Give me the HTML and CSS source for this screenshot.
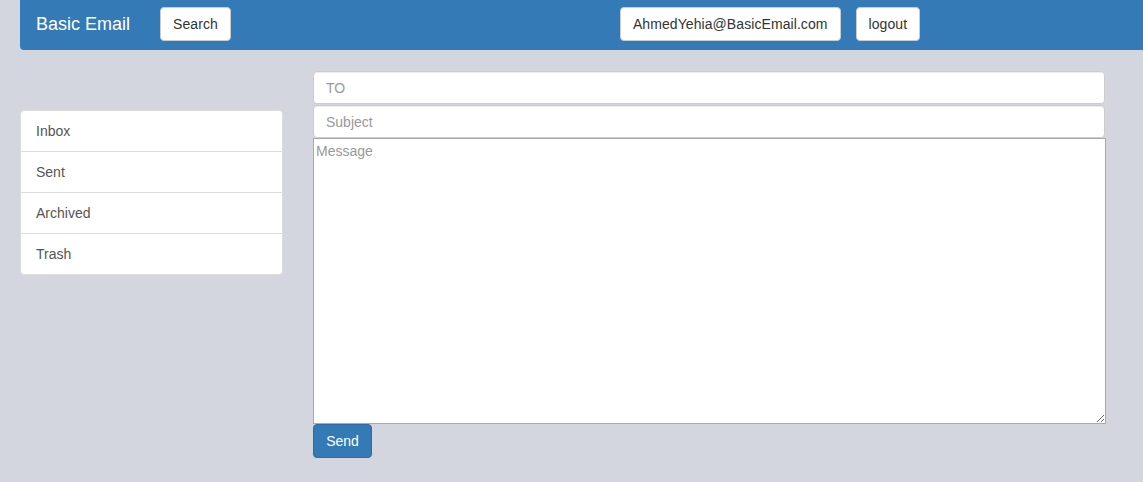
FILE: index.html
```html
<!DOCTYPE html>
<html>
<head>
<meta charset="utf-8">
<title>Basic Email</title>
<link rel="stylesheet" href="styles.css">
</head>
<body>
<nav class="navbar">
  <span class="brand">Basic Email</span>
  <button class="btn btn-default btn-nav">Search</button>
  <div class="nav-right">
    <button class="btn btn-default btn-nav">AhmedYehia@BasicEmail.com</button>
    <button class="btn btn-default btn-nav">logout</button>
  </div>
</nav>
<main class="main">
  <ul class="list-group">
    <li class="list-item">Inbox</li>
    <li class="list-item">Sent</li>
    <li class="list-item">Archived</li>
    <li class="list-item">Trash</li>
  </ul>
  <form class="compose">
    <input class="form-control to" type="text" placeholder="TO">
    <input class="form-control" type="text" placeholder="Subject">
    <textarea class="message" placeholder="Message"></textarea>
    <div><button type="button" class="btn btn-primary">Send</button></div>
  </form>
</main>
</body>
</html>
```

FILE: styles.css
```css
html, body {
  margin: 0;
  padding: 0;
  overflow: hidden;
}
body {
  background: #d3d6df;
  font-family: "Liberation Sans", Arial, sans-serif;
  font-size: 14px;
  line-height: 20px;
  color: #333;
  height: 482px;
}
.navbar {
  margin-left: 20px;
  height: 50px;
  background: #337ab7;
  border-bottom-left-radius: 4px;
  display: flex;
  align-items: center;
  box-sizing: border-box;
  padding-left: 16px;
  padding-bottom: 2px;
}
.brand {
  color: #fff;
  font-size: 18px;
  line-height: 20px;
  margin-right: 30px;
}
.btn {
  font-family: "Liberation Sans", Arial, sans-serif;
  font-size: 14px;
  line-height: 20px;
  padding: 6px 12px;
  border-radius: 4px;
  border: 1px solid #ccc;
  cursor: pointer;
  height: 34px;
  box-sizing: border-box;
}
.btn-nav {
  letter-spacing: 0.08px;
}
.btn-default {
  background: #fff;
  color: #333;
}
.btn-primary {
  background: #337ab7;
  border-color: #2e6da4;
  color: #fff;
}
.nav-right {
  margin-left: 389px;
  display: flex;
  gap: 15px;
}
.main {
  display: flex;
  padding-left: 20px;
  padding-top: 20px;
}
.list-group {
  list-style: none;
  margin: 40px 0 0 0;
  padding: 0;
  width: 263px;
  align-self: flex-start;
}
.list-item {
  background: #fff;
  border: 1px solid #ddd;
  padding: 10px 15px;
  margin-bottom: -1px;
  color: #555;
}
.list-item:first-child {
  border-top-left-radius: 4px;
  border-top-right-radius: 4px;
}
.list-item:last-child {
  border-bottom-left-radius: 4px;
  border-bottom-right-radius: 4px;
  margin-bottom: 0;
}
.compose {
  margin-left: 30px;
  width: 792px;
  display: flex;
  flex-direction: column;
  padding-top: 1px;
}
.form-control {
  display: block;
  height: 33px;
  box-sizing: border-box;
  padding: 6px 12px;
  font-family: "Liberation Sans", Arial, sans-serif;
  font-size: 14px;
  color: #555;
  background: #fff;
  border: 1px solid #ccc;
  border-radius: 4px;
  box-shadow: inset 0 1px 1px rgba(0,0,0,.075);
  margin: 0;
  outline: none;
}
.form-control.to {
  margin-bottom: 1px;
}
.form-control::placeholder,
.message::placeholder {
  color: #999;
}
.message {
  display: block;
  margin: 0;
  width: 793px;
  height: 286px;
  box-sizing: border-box;
  border: 1px solid #a9a9a9;
  padding: 2px;
  font-family: "Liberation Sans", Arial, sans-serif;
  font-size: 14px;
  line-height: 20px;
  border-radius: 0;
  resize: both;
  outline: none;
}
.compose .btn-primary {
  display: block;
  width: 59px;
  padding: 6px 12px;
  margin-top: 0;
}
```
